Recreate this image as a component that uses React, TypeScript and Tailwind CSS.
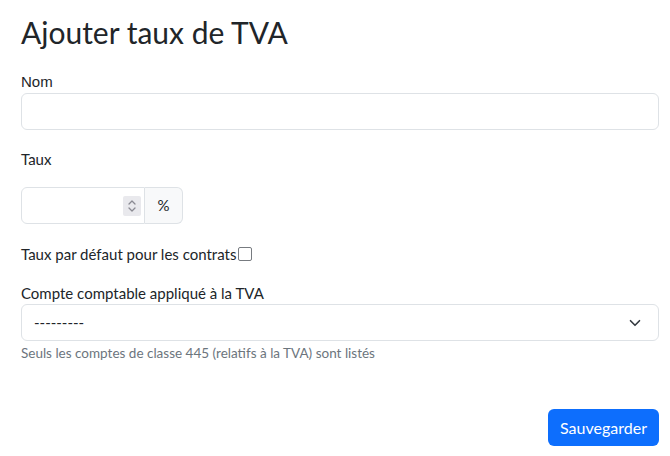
import React from "react";

const lato = { fontFamily: "Lato, 'Noto Sans', sans-serif" };

const Spinner: React.FC = () => (
  <div className="flex h-[20px] w-[18px] flex-col items-center justify-center rounded-[2px] bg-[#e9e9ed]">
    <svg width="10" height="16" viewBox="0 0 10 16" fill="none" stroke="#8a8a92" strokeWidth="1.3" strokeLinecap="round" strokeLinejoin="round">
      <path d="M2 6 5 3 8 6" />
      <path d="M2 10 5 13 8 10" />
    </svg>
  </div>
);

export default function App() {
  return (
    <div className="min-h-[456px] w-[670px] bg-white pl-[21px] pr-[11px] text-[#212529]" style={lato}>
      <h1 className="pt-[13px] text-[30px] font-normal leading-[38px]">Ajouter taux de TVA</h1>

      <form className="mt-[20px]" onSubmit={(e) => e.preventDefault()}>
        {/* Nom */}
        <label className="block text-[15px] leading-[22px]" style={{ fontFamily: "'Liberation Sans', Arial, sans-serif" }}>
          Nom
        </label>
        <input type="text" className="block h-[37px] w-full rounded-[6px] border border-[#dee2e6] px-3 outline-none" />

        {/* Taux */}
        <label className="mt-[18px] block text-[15px] leading-[22px]">Taux</label>
        <div className="mt-[17px] flex h-[37px] w-[162px]">
          <div className="flex w-[124px] items-center justify-end rounded-l-[6px] border border-[#dee2e6] pr-[3px]">
            <input type="text" className="h-full w-[90px] min-w-0 flex-1 bg-transparent px-3 outline-none" />
            <Spinner />
          </div>
          <div className="flex flex-1 items-center justify-center rounded-r-[6px] border border-l-0 border-[#dee2e6] bg-[#f8f9fa] text-[15px]">
            %
          </div>
        </div>

        {/* Checkbox */}
        <div className="mt-[19px] flex items-center text-[15px] leading-[22px]">
          <span>Taux par défaut pour les contrats</span>
          <span className="ml-[2px] inline-block h-[14px] w-[14px] rounded-[2px] border-[1.5px] border-[#777b80] bg-white" />
        </div>

        {/* Compte */}
        <label className="mt-[17px] block text-[15px] leading-[22px]">Compte comptable appliqué à la TVA</label>
        <div className="flex h-[37px] w-full items-center justify-between rounded-[6px] border border-[#dee2e6] pl-[12px] pr-[17px] text-[15px]">
          <span>---------</span>
          <svg width="12" height="12" viewBox="0 0 16 16" fill="none" stroke="#343a40" strokeWidth="2.2" strokeLinecap="round" strokeLinejoin="round">
            <path d="m2 5 6 6 6-6" />
          </svg>
        </div>
        <p className="mt-[2px] text-[13.5px] leading-[20px] text-[#6c757d]">Seuls les comptes de classe 445 (relatifs à la TVA) sont listés</p>

        <div className="mt-[46px] flex justify-end">
          <button type="submit" className="h-[37px] w-[111px] rounded-[6px] bg-[#0d6efd] text-[16px] text-white">
            Sauvegarder
          </button>
        </div>
      </form>
    </div>
  );
}
